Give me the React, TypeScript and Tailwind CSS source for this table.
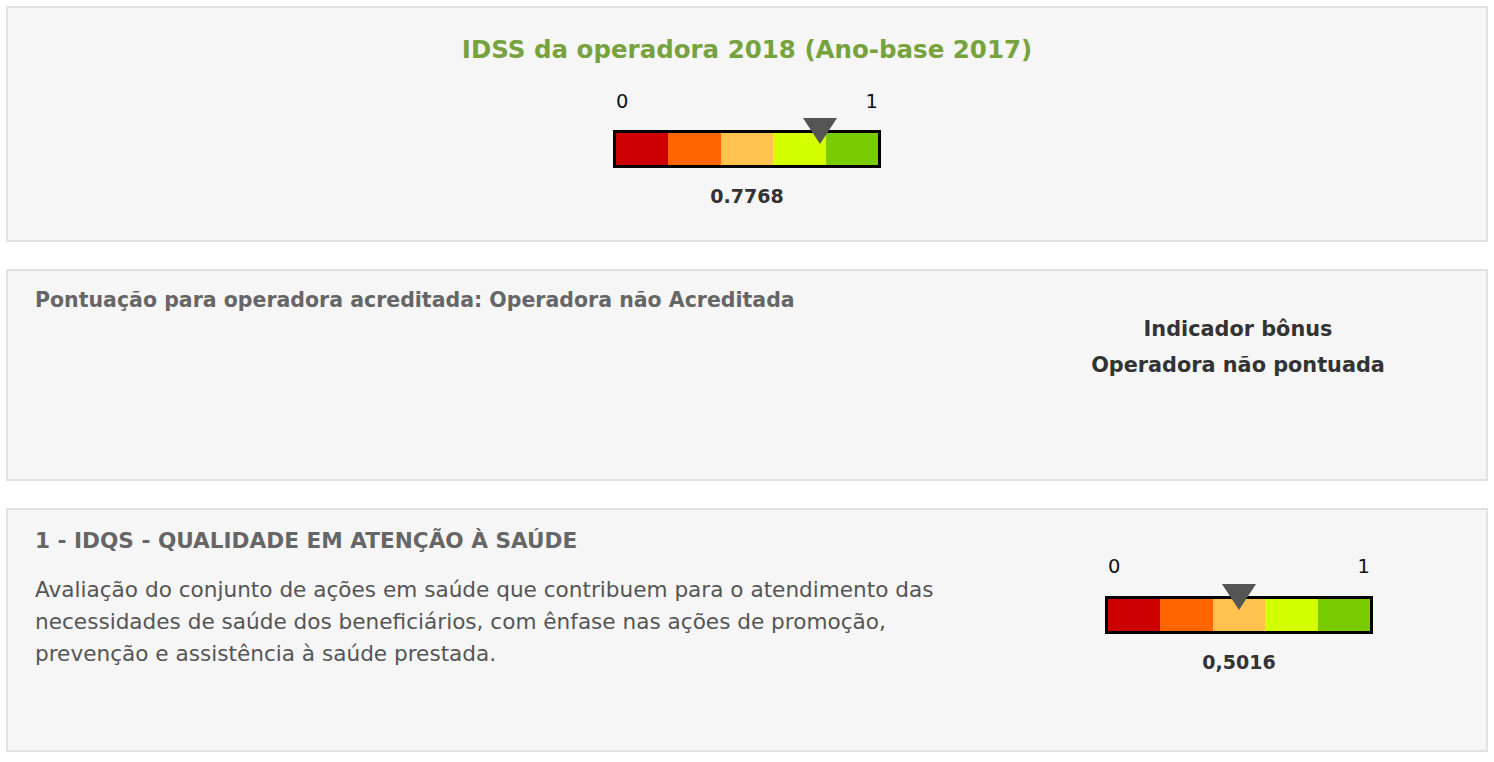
const segmentos = ["bg-[#cc0000]", "bg-[#ff6600]", "bg-[#ffc24f]", "bg-[#d4ff00]", "bg-[#78cc00]"]

const Gauge = ({ value, label }: { value: number; label: string }) => {
  return (
    <div className="flex w-[268px] flex-col items-center">
      <div className="flex w-full justify-between px-[3px] text-[19.5px] leading-none text-[#111]">
        <span>0</span>
        <span>1</span>
      </div>
      <div className="relative mt-[19px] h-[38px] w-full border-[3px] border-black">
        <div className="flex h-full">
          {segmentos.map((s) => (
            <div key={s} className={`flex-1 ${s}`} />
          ))}
        </div>
        <div
          className="absolute top-[-15px] h-0 w-0 border-x-[17px] border-t-[26px] border-x-transparent border-t-[#555]"
          style={{ left: `calc(${value * 100}% - 17px)` }}
        />
      </div>
      <div className="mt-[19px] text-[19px] font-bold leading-none text-[#333]">{label}</div>
    </div>
  )
}

export default function App() {
  return (
    <div className="flex flex-col gap-[27px] bg-white px-[6px] pt-[6px] font-['DejaVu_Sans',sans-serif]">
      <div className="flex h-[236px] flex-col items-center border-2 border-[#e2e2e2] bg-[#f6f6f6] pt-[30px]">
        <h1 className="text-[24.5px] font-bold leading-none text-[#76a33e]">IDSS da operadora 2018 (Ano-base 2017)</h1>
        <div className="mt-[29px]">
          <Gauge value={0.7768} label="0.7768" />
        </div>
      </div>

      <div className="flex h-[212px] border-2 border-[#e2e2e2] bg-[#f6f6f6] pl-[27px] pt-[19px]">
        <div className="flex-1 text-[20.5px] font-bold leading-none text-[#666]">
          Pontuação para operadora acreditada: Operadora não Acreditada
        </div>
        <div className="mr-[98px] mt-[21px] w-[300px] text-center text-[20.8px] font-bold leading-[36px] text-[#333]">
          <div>Indicador bônus</div>
          <div>Operadora não pontuada</div>
        </div>
      </div>

      <div className="flex h-[244px] border-2 border-[#e2e2e2] bg-[#f6f6f6] pl-[27px] pt-[20px]">
        <div className="flex-1">
          <h2 className="text-[21.6px] font-bold leading-none text-[#666]">1 - IDQS - QUALIDADE EM ATENÇÃO À SAÚDE</h2>
          <p className="mt-[22px] w-[935px] text-[21.6px] leading-[32px] text-[#555]">
            Avaliação do conjunto de ações em saúde que contribuem para o atendimento das necessidades de saúde dos
            beneficiários, com ênfase nas ações de promoção, prevenção e assistência à saúde prestada.
          </p>
        </div>
        <div className="mr-[113px] mt-[27px]">
          <Gauge value={0.5016} label="0,5016" />
        </div>
      </div>
    </div>
  )
}
